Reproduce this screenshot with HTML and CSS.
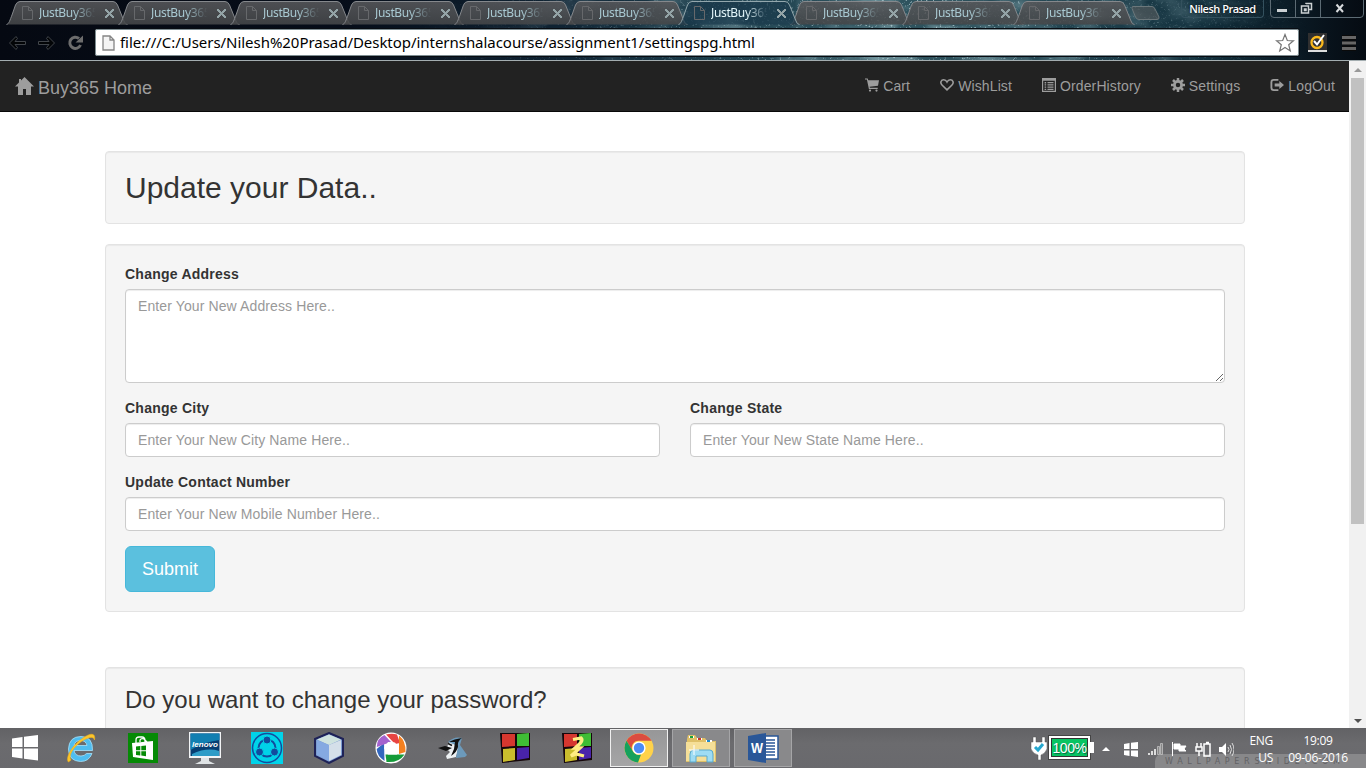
FILE: index.html
```html
<!DOCTYPE html>
<html lang="en">
<head>
<meta charset="utf-8">
<title>JustBuy365</title>
<link rel="stylesheet" href="styles.css">
</head>
<body>
<svg class="defs" width="0" height="0">
  <defs>
    <linearGradient id="tabfill" x1="0" y1="0" x2="0" y2="1"><stop offset="0" stop-color="#57585b"/><stop offset="1" stop-color="#454749"/></linearGradient>
    <symbol id="tab" viewBox="0 0 122 25"><path d="M.5 24.500C3 24 4 20 6 15L9.500 5Q11 1.500 14 1.500H107Q110 1.500 111.500 5L118 21Q119 24.500 121.500 24.500" fill="url(#tabfill)" fill-opacity=".88" stroke="#85888c"/></symbol>
    <symbol id="tab-on" viewBox="0 0 122 25"><path d="M.5 24.500C3 24 4 20 6 15L9.500 5Q11 1.500 14 1.500H107Q110 1.500 111.500 5L118 21Q119 24.500 121.500 24.500" fill="#1b3b4d" fill-opacity=".7" stroke="#93a7ad"/></symbol>
    <symbol id="page" viewBox="0 0 11 14"><path d="M.5.5H6.500L10.500 4.500V13.500H.5ZM6.500.5V4.500H10.500"/></symbol>
  </defs>
</svg>
<header class="browser">
  <svg class="sky" width="1366" height="60">
    <filter id="stars" x="0" y="0" width="100%" height="100%"><feTurbulence type="fractalNoise" baseFrequency=".45" numOctaves="3" seed="8"/><feColorMatrix values="0 0 0 0 .68  0 0 0 0 .86  0 0 0 0 .9  4 4 0 0 -4.6"/></filter>
    <filter id="cloud" x="0" y="0" width="100%" height="100%"><feTurbulence type="fractalNoise" baseFrequency=".02 .04" numOctaves="4" seed="3"/><feColorMatrix values="0 0 0 0 .5  0 0 0 0 .72  0 0 0 0 .76  3 0 0 0 -1.300"/></filter>
    <linearGradient id="fade"><stop offset=".3" stop-color="#000"/><stop offset=".5" stop-color="#777"/><stop offset=".68" stop-color="#fff"/><stop offset=".8" stop-color="#888"/><stop offset=".96" stop-color="#000"/></linearGradient>
    <mask id="band"><rect width="1366" height="60" fill="url(#fade)"/></mask>
    <g mask="url(#band)"><rect width="1366" height="60" filter="url(#cloud)" opacity=".55"/><rect width="1366" height="60" filter="url(#stars)" opacity=".6"/></g>
  </svg>
  <div class="tabstrip">
    <div class="tabs">
      <div class="tab"><svg class="shape"><use href="#tab"/></svg><svg class="doc"><use href="#page"/></svg><span>JustBuy365</span><b></b></div>
      <div class="tab"><svg class="shape"><use href="#tab"/></svg><svg class="doc"><use href="#page"/></svg><span>JustBuy365</span><b></b></div>
      <div class="tab"><svg class="shape"><use href="#tab"/></svg><svg class="doc"><use href="#page"/></svg><span>JustBuy365</span><b></b></div>
      <div class="tab"><svg class="shape"><use href="#tab"/></svg><svg class="doc"><use href="#page"/></svg><span>JustBuy365</span><b></b></div>
      <div class="tab"><svg class="shape"><use href="#tab"/></svg><svg class="doc"><use href="#page"/></svg><span>JustBuy365</span><b></b></div>
      <div class="tab"><svg class="shape"><use href="#tab"/></svg><svg class="doc"><use href="#page"/></svg><span>JustBuy365</span><b></b></div>
      <div class="tab active"><svg class="shape"><use href="#tab-on"/></svg><svg class="doc"><use href="#page"/></svg><span>JustBuy365</span><b></b></div>
      <div class="tab"><svg class="shape"><use href="#tab"/></svg><svg class="doc"><use href="#page"/></svg><span>JustBuy365</span><b></b></div>
      <div class="tab narrow"><svg class="shape"><use href="#tab"/></svg><svg class="doc"><use href="#page"/></svg><span>JustBuy365</span><b></b></div>
      <div class="tab last"><svg class="shape"><use href="#tab"/></svg><svg class="doc"><use href="#page"/></svg><span>JustBuy365</span><b></b></div>
      <svg class="newtab" width="32" height="16" viewBox="0 0 32 16"><path d="M3 1.500H22Q24 1.500 25 4L29 12Q29.500 14.500 27 14.500H9Q6.500 14.500 5.500 12L2 3.500Q1.500 1.500 3 1.500Z" fill="#4e5659" fill-opacity=".7" stroke="#6b777b"/></svg>
    </div>
    <div class="user">Nilesh Prasad</div>
    <svg class="winctl" width="94" height="19" viewBox="0 0 94 19"><path d="M.5 0V14Q.5 17.500 4 17.500H90Q93.500 17.500 93.500 14V0M25.500 0V17M50.500 0V17" fill="none" stroke="#5c6b74"/><path d="M7 9H17V12H7Z" fill="#ccd1d3"/><path d="M36 4V3.500H41.500V9.500H39M31.500 6H38.500V13H31.500ZM34.500 9H36V10.500H34.500Z" fill="none" stroke="#ccd1d3" stroke-width="1.500"/><path d="M66.500 4.500 73 12M73 4.500 66.500 12" stroke="#d7dadd" stroke-width="2"/></svg>
  </div>
  <div class="toolbar">
    <svg class="navbtns" width="94" height="28" viewBox="0 0 94 28"><g fill="#030507" stroke="#41454a"><path d="M9.500 15 16 8.500 17.500 10.500 15 13.500H25.500V16.500H15L17.500 19.500 16 21.500Z"/><path d="M54.500 15 48 8.500 46.500 10.500 49 13.500H38.500V16.500H49L46.500 19.500 48 21.500Z"/></g><path d="M79 10.500A5.600 5.600 0 1 0 80.500 17" fill="none" stroke="#6d6d6d" stroke-width="3"/><path d="M75.500 14.500H83V7.500Z" fill="#6d6d6d"/></svg>
    <div class="omnibox"><svg class="file" width="13" height="16" viewBox="0 0 13 16"><path d="M1 1H8L12 5V15H1ZM8 1V5H12" fill="#f4f4f4" stroke="#858585" stroke-width="1.300"/></svg><span class="url">file:///C:/Users/Nilesh%20Prasad/Desktop/internshalacourse/assignment1/settingspg.html</span><svg width="20" height="20" viewBox="0 0 20 20"><path d="M10 1.500 12.300 7.500 18.500 7.800 13.700 11.700 15.300 18 10 14.500 4.700 18 6.300 11.700 1.500 7.800 7.700 7.500Z" fill="#fff" stroke="#747474" stroke-width="1.200"/></svg></div>
    <svg class="norton" width="19" height="19" viewBox="0 0 19 19"><path d="M0 0H19V19H0Z" fill="#303030"/><path d="M0 17H19V19H0Z" fill="#ddd"/><circle cx="9" cy="9.500" r="5.500" fill="none" stroke="#fab91d" stroke-width="2.300"/><path d="M6 8 9 11.500 16 2" fill="none" stroke="#fff" stroke-width="2"/></svg>
    <svg class="burger" width="16" height="16" viewBox="0 0 16 16"><path d="M1 2.500H15M1 8H15M1 13.500H15" stroke="#0a0a0a" stroke-width="5"/><path d="M1 2.500H15M1 8H15M1 13.500H15" stroke="#666" stroke-width="3"/></svg>
  </div>
</header>

<div class="viewport">
  <div class="document">
    <nav class="navbar">
      <a class="brand"><svg width="19" height="18" viewBox="0 0 19 18"><path d="M9.500 0 19 9.500H16V18H11V12H8V18H3V9.500H0L4 5.500V2H6V3.500Z"/></svg>Buy365 Home</a>
      <div class="links">
        <a><svg viewBox="0 0 14 14"><path d="M0 .4H2.700L3.200 2.200H14L13 7.700 4.600 8.700 4.900 9.700H12.700V11.100H3.900L1.900 1.600H0Z"/><circle cx="5" cy="12.600" r="1.100"/><circle cx="11.500" cy="12.600" r="1.100"/></svg>Cart</a>
        <a><svg viewBox="0 0 14 14"><path d="M7 11.800 2 7C-.3 4.700 1.200 1.700 3.700 1.700 5.300 1.700 6.300 2.600 7 4 7.700 2.600 8.700 1.700 10.300 1.700 12.800 1.700 14.300 4.700 12 7Z" fill="none" stroke="#9d9d9d" stroke-width="1.600"/></svg>WishList</a>
        <a><svg viewBox="0 0 14 14"><path d="M.6.600H13.400V13.400H.6Z" fill="none" stroke="#9d9d9d" stroke-width="1.200"/><path d="M1 1H13V2.800H1ZM2.600 4H4.200V5.400H2.600ZM5.500 4H11.500V5.200H5.500ZM2.600 6.300H4.200V7.600H2.600ZM5.500 6.300H11.500V7.500H5.500ZM2.600 8.500H4.200V9.800H2.600ZM5.500 8.500H11.500V9.700H5.500ZM2.600 10.700H4.200V12H2.600ZM5.500 10.700H11.500V11.900H5.500Z"/></svg>OrderHistory</a>
        <a><svg viewBox="0 0 14 14"><circle cx="7" cy="7" r="3.600" fill="none" stroke="#9d9d9d" stroke-width="2.700"/><path d="M7 0V3M7 11V14M0 7H3M11 7H14M2 2 4 4M10 10 12 12M12 2 10 4M4 10 2 12" stroke="#9d9d9d" stroke-width="2.500"/></svg>Settings</a>
        <a><svg viewBox="0 0 15 14"><path d="M9 1.500H4Q1.500 1.500 1.500 4V10Q1.500 12.500 4 12.500H9" fill="none" stroke="#9d9d9d" stroke-width="2"/><path d="M5 5.300H10V2.700L15 7 10 11.300V8.700H5Z"/></svg>LogOut</a>
      </div>
    </nav>
    <main class="container">
      <section class="well title"><h1>Update your Data..</h1></section>
      <form class="well form">
        <div class="group"><label>Change Address</label><textarea class="control" placeholder="Enter Your New Address Here.."></textarea></div>
        <div class="row">
          <div class="group"><label>Change City</label><input class="control" placeholder="Enter Your New City Name Here.."></div>
          <div class="group"><label>Change State</label><input class="control" placeholder="Enter Your New State Name Here.."></div>
        </div>
        <div class="group"><label class="wide">Update Contact Number</label><input class="control" placeholder="Enter Your New Mobile Number Here.."></div>
        <button type="button" class="submit">Submit</button>
      </form>
      <section class="well password"><h2>Do you want to change your password?</h2></section>
    </main>
  </div>
  <div class="scrollbar"><i class="up"></i><div class="thumb"></div><i class="down"></i></div>
</div>

<footer class="taskbar">
  <div class="start"><svg width="28" height="28" viewBox="0 0 28 28"><path d="M1 4.500 11.500 3V13H1ZM13 2.800 27 1V13H13ZM1 14.500H11.500V24.500L1 23ZM13 14.500H27V26.500L13 24.700Z" fill="#fff"/></svg></div>
  <div class="app"><svg viewBox="0 0 32 32"><path d="M9 13.500H22Q21 8.500 15.500 8.500 10 8.500 9 13.500ZM27.500 18.500H9Q10 24 16 24 19.500 24 21.500 21.500H27Q24 29.500 15.500 29.500 3.500 29 3.500 17 4 4.500 16 4.500 28 4.500 27.500 18.500Z" fill="#4fbdf0" fill-rule="evenodd" stroke="#a9e2fa" stroke-width=".8"/><path d="M3.500 30C0 26 7 13 18 6 25 1 31 .5 29.500 8 28.500 3.500 23 5.500 17 9 8 15 3 24 6 28Z" fill="#fdc62c" stroke="#eeb019" stroke-width=".6"/></svg></div>
  <div class="app"><svg viewBox="0 0 32 32"><path d="M1 1H31V31H1Z" fill="#058a05"/><path d="M9 11V8Q9 5 12 5H15Q18 5 18 9V11M13 10V8Q14 6 17 7L20 10" fill="none" stroke="#fff" stroke-width="1.300"/><path d="M5 11 26 9V28L6 25Z" fill="#fff"/><path d="M9 14.500 13.300 14V18.300H9ZM14.300 14 19 13.500V18.300H14.300ZM9 19.300H13.300V23.500L9 23ZM14.300 19.300H19V24.200L14.300 23.600Z" fill="#058a05"/></svg></div>
  <div class="app"><svg viewBox="0 0 32 32"><path d="M0 0H32V26H0Z" fill="#f2f4f5"/><path d="M1.500 1.500H30.500V24H1.500Z" fill="#063e72"/><path d="M1.500 1.500H30.500V8Q14 10 1.500 18Z" fill="#127fb1"/><path d="M3 22Q18 15 30 19V24H3Z" fill="#2e9cc7"/><path d="M12 26H20V29L26 32H6L12 29Z" fill="#dfe3e5"/><text x="3" y="15" textLength="26" lengthAdjust="spacingAndGlyphs" font-family="Liberation Sans" font-size="7" font-style="italic" font-weight="bold" fill="#fff">lenovo</text></svg></div>
  <div class="app"><svg viewBox="0 0 32 32"><path d="M0 0H32V32H0Z" fill="#00d3e9"/><g fill="none" stroke="#124c9e"><circle cx="16" cy="16" r="14.500" stroke-width="1.500"/><circle cx="16" cy="16" r="8.500" stroke-width="2"/></g><g fill="#124c9e" stroke="#00d3e9"><circle cx="16" cy="8" r="4"/><circle cx="8.500" cy="20" r="4"/><circle cx="23.500" cy="20" r="4"/></g></svg></div>
  <div class="app"><svg viewBox="0 0 32 32"><path d="M16 1 30 7V24L16 31 2 24V7Z" fill="#7b9bd0" stroke="#1e2257" stroke-width="2"/><path d="M16 2.500 28 7.500 16 13 4 7.500Z" fill="#cfe3df"/><path d="M16 13 28 8V23L16 29Z" fill="#d4dfe9"/><path d="M16 13 4 8V23L16 29Z" fill="#85a9e1"/></svg></div>
  <div class="app"><svg viewBox="0 0 32 32"><circle cx="16" cy="16" r="15.500" fill="#fff"/><path d="M11 2.500Q17 1 22 2.500L25 11 20 12Z" fill="#e84442"/><path d="M24 3.500Q31 9 30.500 20L24 22Z" fill="#f38020"/><path d="M29.500 22.500Q24 31 11.500 30L10.500 22.500Z" fill="#159b39"/><path d="M9.500 29Q2 24 1.700 17L9 11Z" fill="#3267be"/><path d="M1.800 15Q2 6 9.500 3L16 10Z" fill="#a462ce"/><path d="M13 10 20 10.500 24 16 22 22.500H13L9 16Z" fill="#fff"/></svg></div>
  <div class="app"><svg viewBox="0 0 32 32"><path d="M11 12Q14 7 21 7L22 14 19 25 10 27 9 24 13 20 10 17Z" fill="#edf1f3"/><path d="M11 10Q17 4 25 6L23 13 30 23 28 25 19 26 21 14Z" fill="#6c9abb"/><path d="M1 16 8 14 15 16 9 19ZM12 10Q17 7 25 6 20 9 21 15 20 20 14 24L17 17 18 10Z" fill="#111"/><path d="M11 11.500 15 13.500" stroke="#111" stroke-width="1.500"/></svg></div>
  <div class="app"><svg viewBox="0 0 32 32"><path d="M1 1 31 1V28L3 31Z" fill="#16070b"/><path d="M3 2H16V14L3 15Z" fill="#d6372f"/><path d="M18 2 30 1V14H18Z" fill="#3fbd35"/><path d="M4 17 16 16V28L4 30Z" fill="#cabd2d"/><path d="M18 16 30 15V26L18 28Z" fill="#4923aa"/></svg></div>
  <div class="app"><svg viewBox="0 0 32 32"><path d="M1 1 31 1V28L3 31Z" fill="#16070b"/><path d="M3 2H16V14L3 15Z" fill="#d6372f"/><path d="M18 2 30 1V14H18Z" fill="#3fbd35"/><path d="M4 17 16 16V28L4 30Z" fill="#cabd2d"/><path d="M18 16 30 15V26L18 28Z" fill="#4923aa"/><path d="M12 7.500 20 6Q22 8 19.500 11L14 16 19 16 10 24 15 22 23 24" fill="none" stroke="#ffed83" stroke-width="3.300"/></svg></div>
  <div class="app open current"><svg viewBox="0 0 32 32"><circle cx="16" cy="16" r="14.500" fill="#ffd24a"/><path d="M3.500 8.800A14.500 14.500 0 0 1 28.600 8.800H16A7 7 0 0 0 9.800 19.500Z" fill="#db4c40"/><path d="M3.500 8.700 10 19.500A7 7 0 0 0 18 22.500L15 30.500A14.500 14.500 0 0 1 3.500 8.700Z" fill="#15a15d"/><circle cx="16" cy="16" r="6.600" fill="#fff"/><circle cx="16" cy="16" r="5.200" fill="#4c8bf5"/></svg></div>
  <div class="app open"><svg viewBox="0 0 32 32"><path d="M2 7 3 3H10L12 6H20L22 9H31V30H1Z" fill="#dfc067"/><path d="M4 4H9V6H4ZM12 6H17V8H12ZM21 8H27V10H21Z" fill="#fff"/><path d="M5 4H8V6H5Z" fill="#19a23c"/><path d="M13 6H16V8H13Z" fill="#ce3929"/><path d="M22 8H25V10H22Z" fill="#218acb"/><path d="M1 10H30V29H1Z" fill="#f5df98"/><path d="M5 30V22Q5 18 9 18H25Q28 18 28 22V30H22V24H11V30Z" fill="#9edcf3" stroke="#58a9cd"/><path d="M9 13V23M4 18H14" stroke="#fff"/></svg></div>
  <div class="app open"><svg viewBox="0 0 32 32"><path d="M17 4H31V27H17Z" fill="#fff" stroke="#2a5798" stroke-width="1.500"/><path d="M19 8H28M19 11H28M19 14H28M19 17H28M19 20H28M19 23H28" stroke="#2a5798" stroke-width="1.500"/><path d="M1 4 19 1V31L1 28Z" fill="#2a5798"/><text x="4" y="21" font-family="Liberation Sans" font-size="14" font-weight="bold" textLength="12" lengthAdjust="spacingAndGlyphs" fill="#fff">W</text></svg></div>
  <div class="tray">
    <svg class="plug" width="18" height="24" viewBox="0 0 18 24"><path d="M3 1H6V6H12V1H15V6H17V13Q15 18 11 19V24H8V19Q3 18 1 13V6H3Z" fill="#fff" stroke="#555" stroke-width=".5"/><path d="M5 11 8 14 13 8" fill="none" stroke="#26a8cf" stroke-width="3"/></svg>
    <div class="battery">100%</div><i class="cap"></i>
    <svg class="status" width="132" height="18" viewBox="0 0 132 18"><path d="M0 11 4 7 8 11Z" fill="#fff"/><path d="M22 4 27.500 3V9H22ZM29 2.800 36 2V9H29ZM22 10.500H27.500V16L22 15ZM29 10.500H36V17L29 16Z" fill="#fff"/><g fill="#ddd"><path d="M46 13H48V15H46ZM49 11H51V15H49ZM52 9H54V15H52Z"/><path d="M55.500 6.500H57.500V14.500H55.500ZM58.500 3.500H60.500V14.500H58.500Z" fill="#888" stroke="#ccc" stroke-width=".7"/></g><path d="M70.500 2V16M72 4H78V6H84L82 9 84 11H77V9H72Z" fill="#fff" stroke="#fff"/><path d="M95 3V7M99 3V7M94 7H100V11H94ZM97 11V16M102 4H108V16H102ZM104 2.500H107" fill="none" stroke="#fff" stroke-width="1.500"/><path d="M117 7H120L124 3V16L120 12H117Z" fill="#fff"/><path d="M126 7Q128 9.500 126 12M128 5Q131 9.500 128 14M130 3Q134 9.500 130 16" fill="none" stroke="#ddd"/></svg>
    <div class="lang">ENG<br>US</div>
    <div class="clock">19:09<br>09-06-2016</div>
  </div>
  <div class="watermark">WALLPAPERSWIDE.COM</div>
</footer>
</body>
</html>
```
FILE: styles.css
```css
* { box-sizing: border-box; }
body { margin: 0; width: 1366px; height: 768px; overflow: hidden; display: flex; flex-direction: column; background: #fff; font: 14px/20px "Liberation Sans", Arial, sans-serif; color: #333; }
svg { flex: none; display: block; }
.defs { position: absolute; }

.browser { position: relative; height: 61px; flex: none; border-bottom: 1px solid #a3adb0; background: linear-gradient(90deg, #050912 0, #060d19 25%, #102535 42%, #1c3e4c 52%, #305560 65%, #254753 77%, #12303d 88%, #08131c 97%, #050b12 100%); }
.sky { position: absolute; top: 0; left: 0; }
.tabstrip { position: relative; height: 25px; display: flex; }
.tabs { display: flex; width: 1175px; padding-left: 6px; }
.tab { position: relative; width: 112px; height: 24px; flex: none; display: flex; align-items: center; padding: 2px 0 0 16px; color: #a9c9d2; font: 12px/18px "Noto Sans", "Open Sans", sans-serif; }
.tab.narrow { width: 111px; }
.tab.last { width: 116px; }
.tab .shape { position: absolute; left: 0; top: 0; width: 122px; height: 25px; }
.tab .doc { position: relative; width: 11px; height: 14px; fill: none; stroke: #66686b; }
.tab span { position: relative; width: 58px; margin-left: 6px; overflow: hidden; white-space: nowrap; letter-spacing: -.35px; -webkit-mask-image: linear-gradient(90deg, #000 60%, transparent 97%); }
.tab b { position: relative; width: 9px; height: 9px; margin-left: 8px; background: linear-gradient(45deg, transparent 43%, #93a3a6 43% 57%, transparent 57%), linear-gradient(-45deg, transparent 43%, #93a3a6 43% 57%, transparent 57%); }
.tab.active { z-index: 1; color: #e4f7fb; }
.newtab { margin: 5px 0 0 1px; }
.user { margin-left: 0; width: 83px; height: 18px; border: 1px solid #34515e; border-top: 0; border-radius: 0 0 4px 4px; color: #fff; text-align: center; white-space: nowrap; font: 600 11px/18px "Open Sans", sans-serif; letter-spacing: -.5px; text-shadow: 0 0 3px #000; }
.winctl { margin-left: 6px; }
.user { margin-left: 6px; }
.toolbar { position: relative; display: flex; height: 35px; padding-top: 3px; }
.omnibox { width: 1206px; height: 29px; padding: 0 4px 0 7px; border: 1px solid #070c12; outline: 1px solid #7d8c91; outline-offset: -2px; border-radius: 3px; background: #fff; background-clip: padding-box; display: flex; align-items: center; }
.url { flex: 1; margin-left: 5px; margin-top: -2px; color: #000; font: 15px/22px "Noto Sans", "Open Sans", sans-serif; letter-spacing: -.04px; white-space: nowrap; }
.norton { margin: 5px 0 0 8px; }
.burger { margin: 7px 0 0 14px; }

.viewport { height: 667px; flex: none; display: flex; overflow: hidden; }
.document { width: 1349px; height: 667px; overflow: hidden; }
.navbar { height: 51px; background: #222; border-bottom: 1px solid #080808; display: flex; justify-content: space-between; color: #9d9d9d; padding: 0 14px 0 15px; }
.navbar svg { fill: #9d9d9d; }
.brand { display: flex; gap: 4px; padding-top: 16px; font-size: 18px; line-height: 22px; }
.links { display: flex; gap: 30px; padding-top: 15px; letter-spacing: .12px; }
.links a { display: flex; gap: 4px; }
.links svg { width: 14px; height: 14px; margin-top: 2px; }
.container { width: 1140px; margin: 39px 0 0 105px; }
.well { border: 1px solid #e3e3e3; border-radius: 4px; background: #f5f5f5; padding: 19px; box-shadow: inset 0 1px 1px rgba(0,0,0,.05); }
.title { height: 73px; margin-bottom: 20px; }
h1 { margin: 0; font-size: 30px; line-height: 33px; font-weight: 400; }
h2 { margin: 0; font-size: 24px; line-height: 26px; font-weight: 400; }
.form { height: 368px; margin-bottom: 55px; }
.group { flex: 1; margin-bottom: 15px; }
.group label { display: block; margin-bottom: 5px; font-weight: 700; letter-spacing: .24px; }
.row { display: flex; gap: 30px; }
.control { display: block; width: 100%; height: 34px; margin: 0; padding: 6px 12px; border: 1px solid #ccc; border-radius: 4px; background: #fff; box-shadow: inset 0 1px 1px rgba(0,0,0,.075); font: 14px/20px "Liberation Sans", Arial, sans-serif; letter-spacing: .11px; }
textarea.control { height: 94px; resize: vertical; }
.control::placeholder { color: #999; opacity: 1; }
.submit { height: 46px; width: 90px; padding: 0; border: 1px solid #46b8da; border-radius: 6px; color: #fff; background: #5bc0de; font: 18px/24px "Liberation Sans", Arial, sans-serif; }
.password { height: 120px; }
.scrollbar { width: 17px; background: #f1f1f1; display: flex; flex-direction: column; align-items: center; }
.thumb { width: 13px; height: 446px; background: #c1c1c1; margin-top: 6px; }
.up, .down { border: 4px solid transparent; }
.up { margin-top: 3px; border-bottom-color: #999; }
.down { margin-top: auto; margin-bottom: 1px; border-top-color: #505050; }

.taskbar { position: relative; height: 40px; display: flex; background: linear-gradient(#626265, #6b6b6e 40%, #69696d); color: #fff; }
.start { width: 50px; display: flex; align-items: center; justify-content: center; }
.app { width: 58px; height: 38px; margin: 1px 2px; display: flex; align-items: center; justify-content: center; flex: none; }
.app svg { width: 32px; height: 32px; }
.open { background: #89898b; border: 1px solid #a5a5a7; }
.current { background: linear-gradient(#979798, #a5a5a6); border-color: #f0f0f0; }
.tray { position: relative; z-index: 1; margin-left: auto; width: 336px; display: flex; }
.plug { margin-top: 8px; }
.battery { width: 41px; height: 23px; margin: 8px 0 0 1px; border: 2px solid #fff; outline: 1px solid #444; background: #08c462; box-shadow: inset 0 0 0 1px #333; color: #fff; font: 14px/20px "Liberation Sans", sans-serif; letter-spacing: -.4px; text-align: center; text-shadow: 1px 1px 1px #064; }
.cap { width: 4px; height: 11px; margin-top: 14px; background: #fff; }
.status { margin: 12px 0 0 8px; }
.lang, .clock { font: 12px/17px "Open Sans", sans-serif; letter-spacing: -.3px; padding-top: 4px; white-space: nowrap; }
.lang { margin-left: 15px; width: 24px; text-align: right; }
.clock { margin-left: 15px; width: 60px; text-align: center; }
.watermark { position: absolute; right: 0; bottom: 0; width: 211px; height: 14px; padding-left: 10px; border-top-left-radius: 7px; background: #88888a; color: #626265; font: 8px/15px "DejaVu Sans", sans-serif; letter-spacing: 4.700px; white-space: nowrap; overflow: hidden; }
```
